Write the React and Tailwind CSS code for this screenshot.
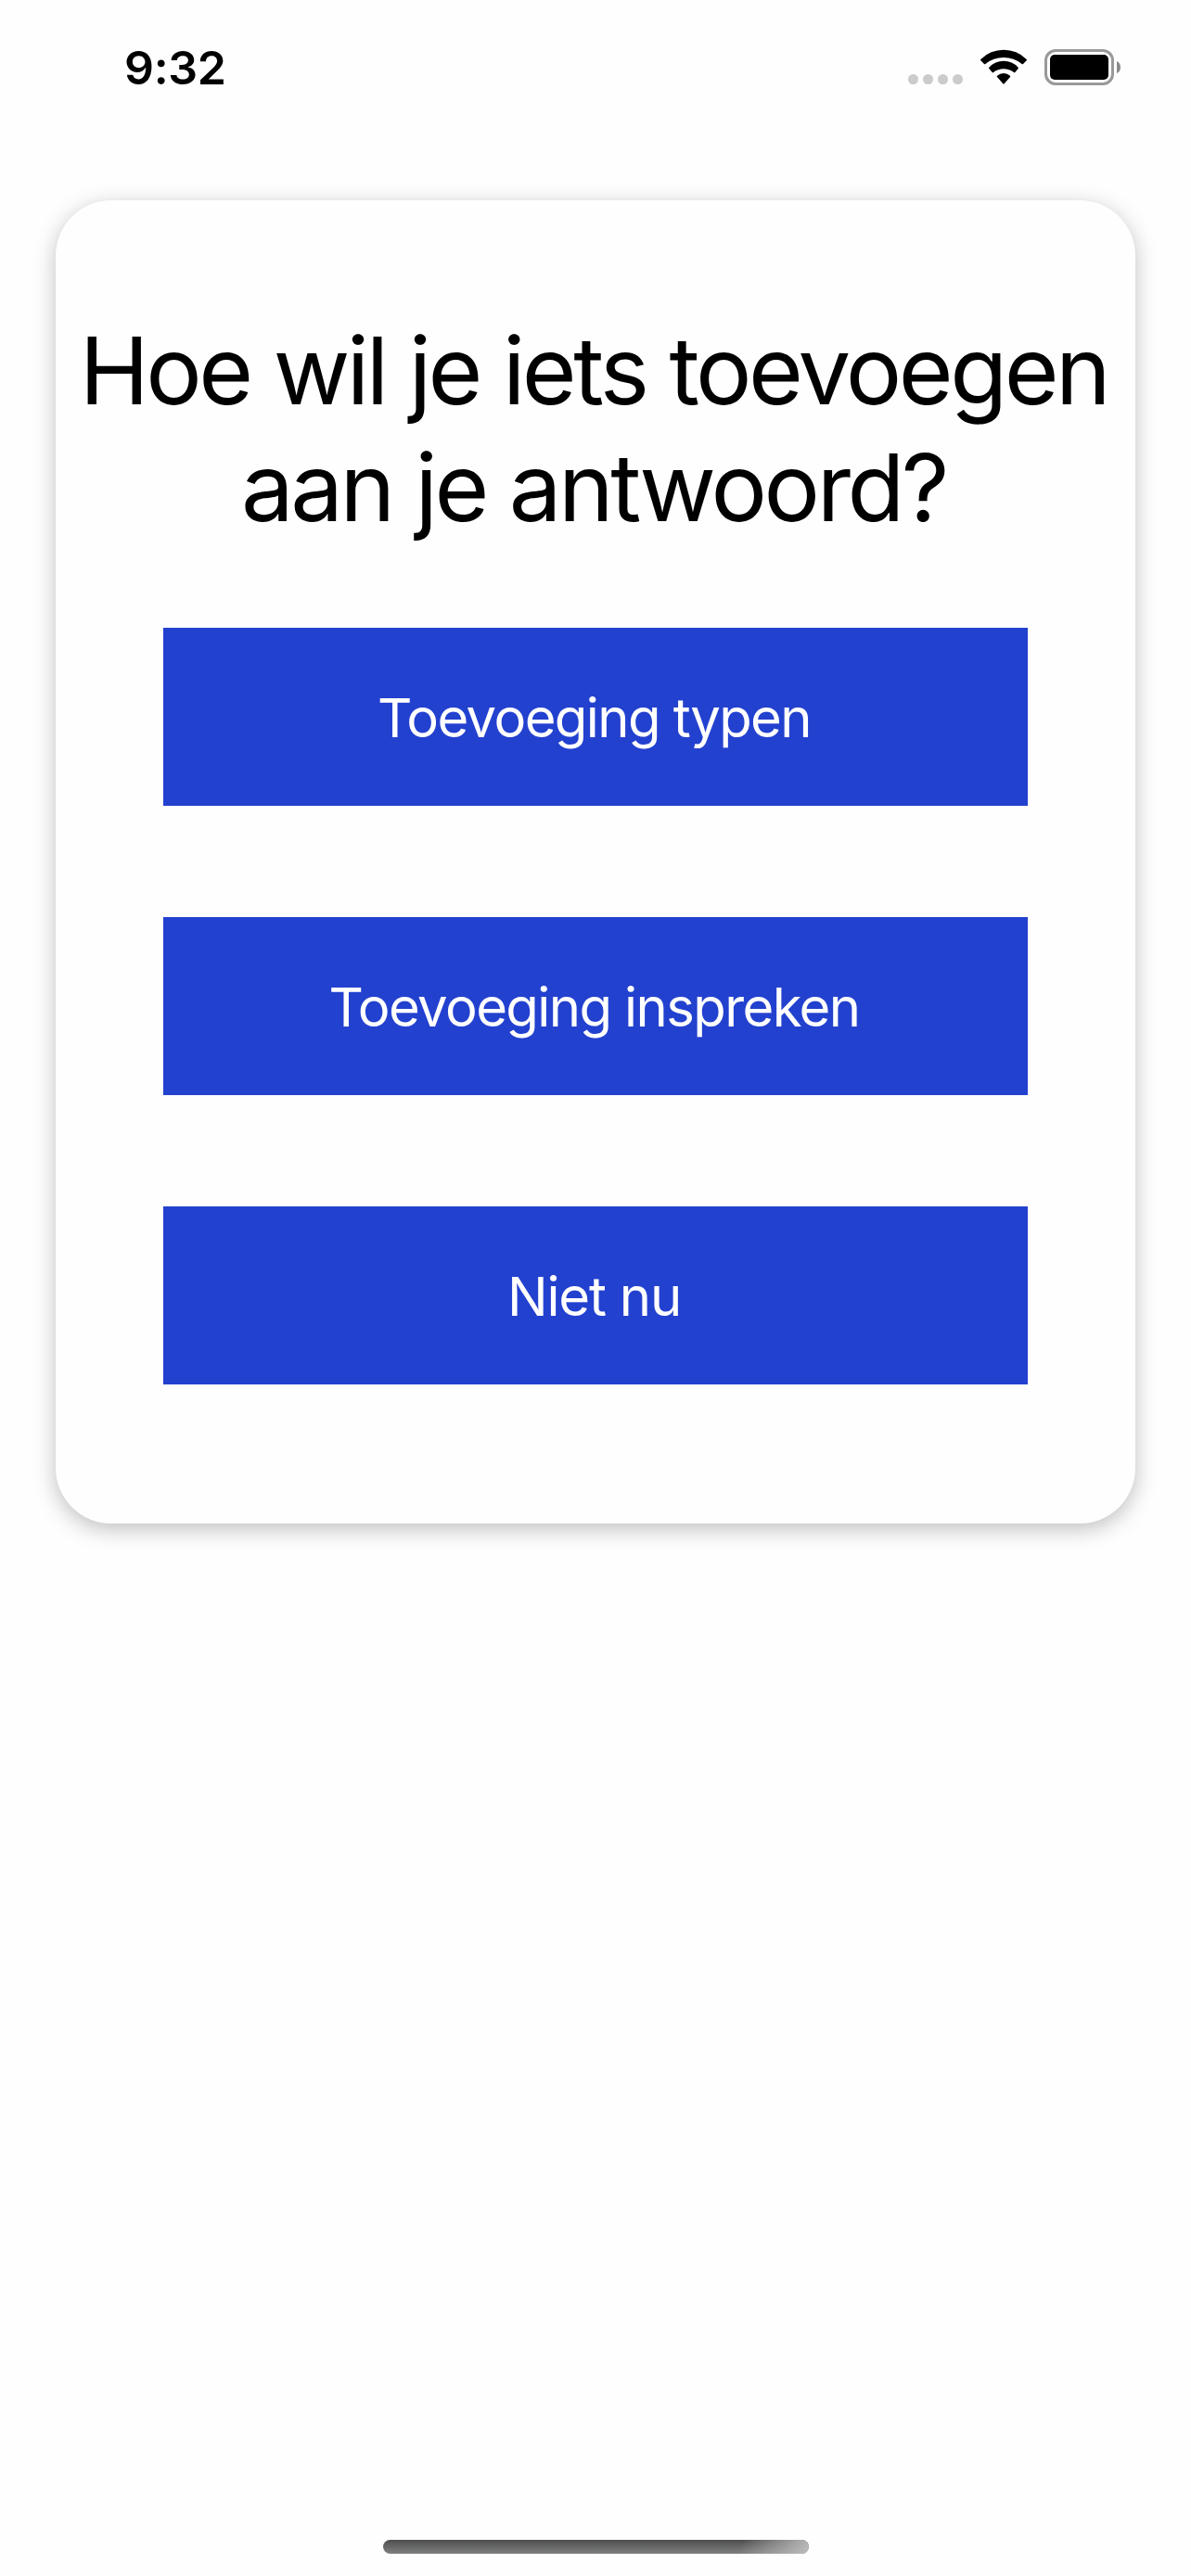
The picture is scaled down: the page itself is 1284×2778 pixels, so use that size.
const actions = [
  { label: "Toevoeging typen", tracking: "tracking-[-1.6px]" },
  { label: "Toevoeging inspreken", tracking: "tracking-[-1.6px]" },
  { label: "Niet nu", tracking: "tracking-[-1.2px]" },
];

function SignalDots() {
  return (
    <div className="mt-[27px] flex gap-[5px]">
      {[0, 1, 2, 3].map((i) => (
        <span key={i} className="size-[11px] rounded-full bg-[#cbcbcb]" />
      ))}
    </div>
  );
}

function WifiIcon() {
  return (
    <svg className="ml-[19px] h-[38px] w-[50px]" viewBox="0 0 150 114" fill="#000">
      <path d="M1 34 Q-1 32 1 30 A104 104 0 0 1 149 30 Q151 32 149 34 L138 45 Q136 47 134 45 A94 94 0 0 0 16 45 Q14 47 12 45 Z" transform="translate(0 3)" />
      <path d="M28 61 Q26 59 28 57 A64 64 0 0 1 122 57 Q124 59 122 61 L112 73 Q110 75 108 73 A55 55 0 0 0 42 73 Q40 75 38 73 Z" transform="translate(0 2)" />
      <path d="M54 88 Q52 86 54 84 A31 31 0 0 1 96 84 Q98 86 96 88 L77 110 Q75 112 73 110 Z" transform="translate(0 2)" />
    </svg>
  );
}

function BatteryIcon() {
  return (
    <svg className="ml-[19px] h-[39px] w-[83px]" viewBox="0 0 83 39">
      <rect x="1.5" y="1.5" width="72" height="36" rx="10.5" fill="none" stroke="#999" strokeWidth="3" />
      <rect x="6" y="6" width="63" height="27" rx="5" fill="#000" />
      <path d="M78 13 C80.7 14.2 82 16.6 82 19.5 C82 22.4 80.7 24.8 78 26 Z" fill="#8a8a8a" />
    </svg>
  );
}

export default function App() {
  return (
    <div className="flex h-[2778px] w-[1284px] flex-col items-center bg-[#fefefe] font-[Inter,sans-serif] text-black">
      <header className="flex h-[216px] w-full items-start pt-[53px] pr-[75px] pl-[134px]">
        <span className="text-[50px] leading-[40px] font-semibold tracking-[-0.3px]">9:32</span>
        <div className="ml-auto flex items-start">
          <SignalDots />
          <WifiIcon />
          <BatteryIcon />
        </div>
      </header>

      <main className="flex h-[1427px] w-[1164px] flex-col items-center rounded-[60px] bg-[#fefefe] pt-[120px] shadow-[0_6px_23px_rgba(0,0,0,0.25)]">
        <h1 className="pr-[4px] text-center text-[101px] leading-[126px] font-normal tracking-[-3.5px] whitespace-nowrap">
          Hoe wil je iets toevoegen
          <br />
          aan je antwoord?
        </h1>
        <div className="mt-[89px] flex w-[932px] flex-col gap-[120px]">
          {actions.map(({ label, tracking }) => (
            <button key={label} type="button" className="flex h-[192px] items-center justify-center bg-[#2341cf] pt-[2px] pr-[3px] text-white">
              <span className={`text-[58px] leading-[70px] ${tracking}`}>{label}</span>
            </button>
          ))}
        </div>
      </main>

      <div className="relative mt-auto mb-[24px] h-[15px] w-[459px] overflow-hidden rounded-full bg-linear-to-b from-[#4d4f4e] to-[#808080]">
        <div className="absolute inset-y-0 right-0 w-[80px] bg-linear-[110deg] from-[#bcbcbc]/0 from-10% to-[#bcbcbc]" />
      </div>
    </div>
  );
}
